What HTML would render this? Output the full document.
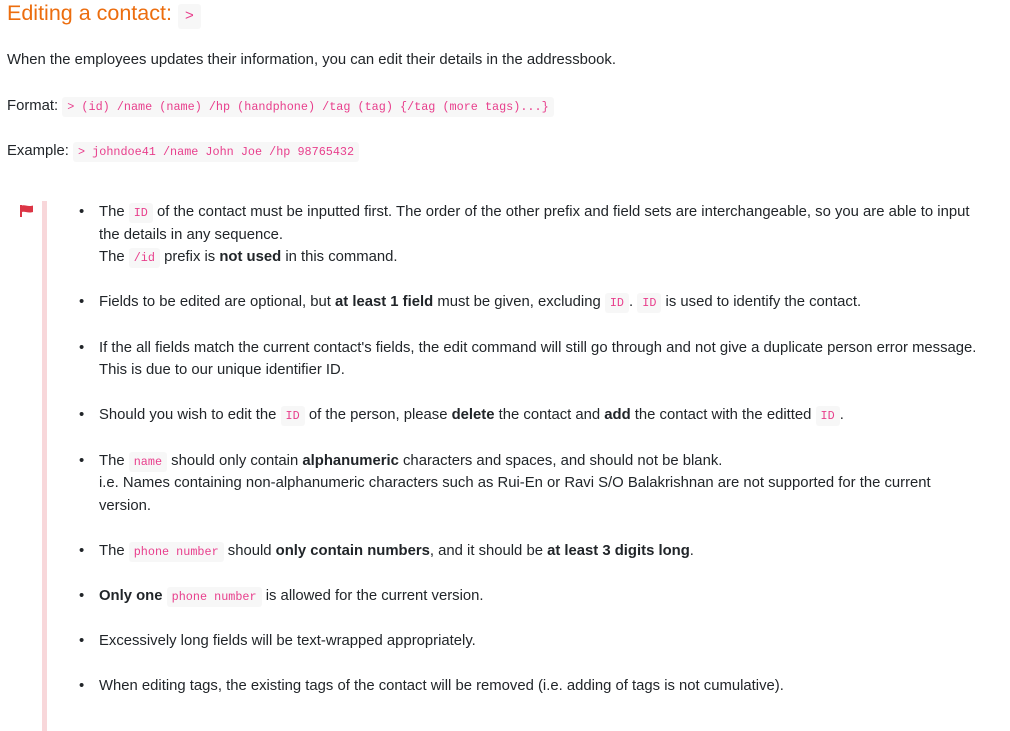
<!DOCTYPE html>
<html><head><meta charset="utf-8"><style>
body{margin:0;background:#fff;font-family:"Liberation Sans",Arial,sans-serif;color:#212529;font-size:14.85px;width:1010px;height:722px;overflow:hidden;position:relative}
code{font-family:"Liberation Mono",monospace;font-size:11.8px;color:#e83e8c;background:#f7f7f7;padding:3px 5px;border-radius:3px;line-height:1}
h2{position:absolute;left:7px;top:0;margin:0;font-weight:normal;font-size:21.5px;color:#ec6d0e;line-height:27px}
h2 code{font-size:15px;padding:4px 7px}
p{position:absolute;left:7px;margin:0;line-height:20px}
.box{position:absolute;left:42px;top:201px;width:5px;height:530px;background:#f8d7da}
.flag{position:absolute;left:20px;top:205px}
ul{position:absolute;left:99px;top:201px;width:882px;margin:0;padding:0;line-height:22.6px}
li{margin-bottom:22.6px;padding-left:0;list-style:none;position:relative}
li:before{content:"•";position:absolute;left:-20px}
</style></head><body>
<h2>Editing a contact: <code>&gt;</code></h2>
<p style="top:50px">When the employees updates their information, you can edit their details in the addressbook.</p>
<p style="top:96px">Format: <code>&gt; (id) /name (name) /hp (handphone) /tag (tag) {/tag (more tags)...}</code></p>
<p style="top:141px">Example: <code>&gt; johndoe41 /name John Joe /hp 98765432</code></p>
<div class="box"></div>
<svg class="flag" width="14" height="12" viewBox="0 0 14 12"><rect x="0" y="0" width="2" height="12" fill="#dc3545"/><path d="M2 0.5 C5 -0.5 8 2 13 0.5 L13 7 C8 8.5 5 6 2 7Z" fill="#dc3545"/></svg>
<ul>
<li>The <code>ID</code> of the contact must be inputted first. The order of the other prefix and field sets are interchangeable, so you are able to input the details in any sequence.<br>The <code>/id</code> prefix is <b>not used</b> in this command.</li>
<li>Fields to be edited are optional, but <b>at least 1 field</b> must be given, excluding <code>ID</code>. <code>ID</code> is used to identify the contact.</li>
<li>If the all fields match the current contact's fields, the edit command will still go through and not give a duplicate person error message. This is due to our unique identifier ID.</li>
<li>Should you wish to edit the <code>ID</code> of the person, please <b>delete</b> the contact and <b>add</b> the contact with the editted <code>ID</code>.</li>
<li>The <code>name</code> should only contain <b>alphanumeric</b> characters and spaces, and should not be blank.<br>i.e. Names containing non-alphanumeric characters such as Rui-En or Ravi S/O Balakrishnan are not supported for the current version.</li>
<li>The <code>phone number</code> should <b>only contain numbers</b>, and it should be <b>at least 3 digits long</b>.</li>
<li><b>Only one</b> <code>phone number</code> is allowed for the current version.</li>
<li>Excessively long fields will be text-wrapped appropriately.</li>
<li>When editing tags, the existing tags of the contact will be removed (i.e. adding of tags is not cumulative).</li>
</ul>
</body></html>
